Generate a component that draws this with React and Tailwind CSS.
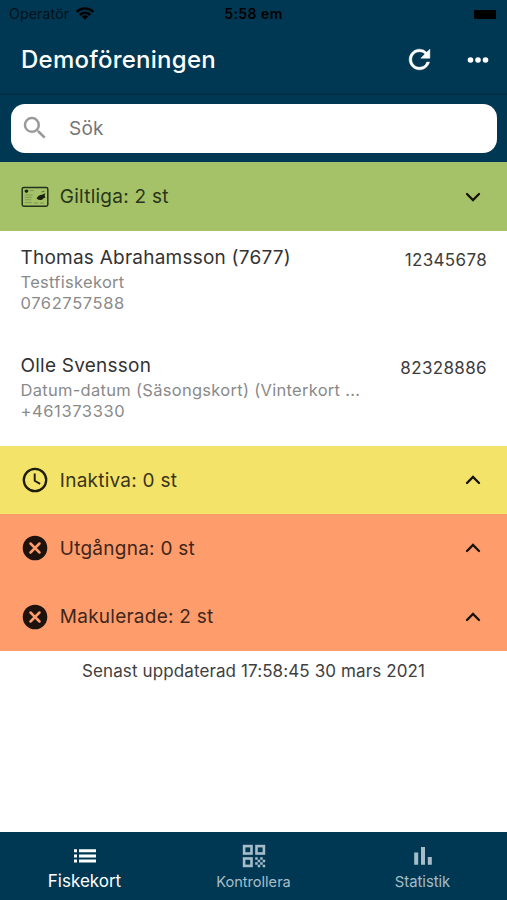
import React from 'react';
import clsx from 'clsx';

const permits = [
  { name: 'Thomas Abrahamsson (7677)', type: 'Testfiskekort', phone: '0762757588', number: '12345678' },
  { name: 'Olle Svensson', type: 'Datum-datum (Säsongskort) (Vinterkort ...', phone: '+461373330', number: '82328886' },
];

function WifiIcon() {
  return (
    <svg width="20" height="15" viewBox="0 0 20 15" fill="none" stroke="#000" strokeWidth="2.5">
      <path d="M1.7 4.8a11.8 11.8 0 0 1 16.6 0" />
      <path d="M4.8 8a7.4 7.4 0 0 1 10.4 0" />
      <path d="M10 12.8l-3.2-3.2a4.6 4.6 0 0 1 6.4 0z" fill="#000" stroke="none" />
    </svg>
  );
}

function RefreshIcon() {
  return (
    <svg width="31" height="31" viewBox="0 0 24 24" fill="#fff" stroke="#fff" strokeWidth="0.4">
      <path d="M17.65 6.35A7.958 7.958 0 0 0 12 4c-4.42 0-7.99 3.58-7.99 8s3.57 8 7.99 8c3.73 0 6.84-2.55 7.73-6h-2.08A5.99 5.99 0 0 1 12 18c-3.31 0-6-2.69-6-6s2.69-6 6-6c1.66 0 3.14.69 4.22 1.78L13 11h7V4l-2.35 2.35z" />
    </svg>
  );
}

function MoreIcon() {
  return (
    <svg width="22" height="8" viewBox="0 0 22 8" fill="#fff">
      <circle cx="3.5" cy="4" r="2.8" />
      <circle cx="11" cy="4" r="2.8" />
      <circle cx="18.5" cy="4" r="2.8" />
    </svg>
  );
}

function SearchIcon() {
  return (
    <svg width="30" height="30" viewBox="0 0 24 24" fill="#999">
      <path d="M15.5 14h-.79l-.28-.27A6.471 6.471 0 0 0 16 9.5 6.5 6.5 0 1 0 9.5 16c1.61 0 3.09-.59 4.23-1.57l.27.28v.79l5 4.99L20.49 19l-4.99-5zm-6 0C7.01 14 5 11.99 5 9.5S7.01 5 9.5 5 14 7.01 14 9.5 11.99 14 9.5 14z" />
    </svg>
  );
}

function CardIcon() {
  return (
    <svg width="28" height="22" viewBox="0 0 28 22" fill="none">
      <rect x="1.2" y="1.4" width="25.6" height="18.8" rx="1.6" stroke="#26331a" strokeWidth="1.5" />
      <path d="M3.6 4.2l2.2-.8 1.6 1-.6 1.8-1.4.8-1.6-1z" fill="#16200c" />
      <path d="M8.5 4.6h4.5M3.8 9h8M3.8 11.4h7M3.8 13.8h6.5M3.8 16.6h7M13 17h4M19 17h4" stroke="#7b954c" strokeWidth="0.9" />
      <path d="M15.6 12.4c1-2.2 3-3.4 5.4-3.6l3.2-1.6-.6 2.6.8 1.8-2.2.8c-1.2 1.8-4 2-5.6.8z" fill="#16200c" />
      <path d="M20.5 6l3-.8" stroke="#5d7438" strokeWidth="1.2" />
    </svg>
  );
}

function ClockIcon() {
  return (
    <svg width="28" height="28" viewBox="0 0 28 28" fill="none" stroke="#1d1b0b">
      <circle cx="14" cy="14" r="11.2" strokeWidth="2.3" />
      <path d="M13.7 7.6v7.1l5.4 3.2" strokeWidth="1.9" />
    </svg>
  );
}

function CancelIcon() {
  return (
    <svg width="28" height="28" viewBox="0 0 28 28">
      <circle cx="14" cy="14" r="12.3" fill="#1d120c" />
      <path d="M9.5 9.5l9 9M18.5 9.5l-9 9" stroke="#fe9c6c" strokeWidth="2.5" strokeLinecap="round" />
    </svg>
  );
}

function Chevron({ open }) {
  return (
    <svg width="16" height="12" viewBox="0 0 16 12" fill="none" stroke="#17130a" strokeWidth="2.3" strokeLinecap="round">
      <path d={open ? 'M2 3l6 6 6-6' : 'M2 9l6-6 6 6'} />
    </svg>
  );
}

function ListIcon() {
  return (
    <svg width="24" height="24" viewBox="0 0 24 24" fill="#fff">
      <path d="M1 5.2h3v3H1zM6 5.2h17v3H6zM1 10.4h3v3H1zM6 10.4h17v3H6zM1 15.6h3v3H1zM6 15.6h17v3H6z" />
    </svg>
  );
}

function QrIcon() {
  return (
    <svg width="24" height="24" viewBox="0 0 24 24">
      <g fill="none" stroke="#a6bdc9" strokeWidth="2.6">
        <rect x="2.1" y="2.1" width="7.4" height="7.4" />
        <rect x="14.5" y="2.1" width="7.4" height="7.4" />
        <rect x="2.1" y="14.5" width="7.4" height="7.4" />
      </g>
      <path
        fill="#a6bdc9"
        d="M13.2 13.2h2.5v2.5h-2.5zM18.2 13.2h2.5v2.5h-2.5zM15.7 15.7h2.5v2.5h-2.5zM20.7 15.7h2.5v2.5h-2.5zM13.2 18.2h2.5v2.5h-2.5zM18.2 18.2h2.5v2.5h-2.5zM15.7 20.7h2.5v2.5h-2.5zM20.7 20.7h2.5v2.5h-2.5z"
      />
    </svg>
  );
}

function ChartIcon() {
  return (
    <svg width="24" height="24" viewBox="0 0 24 24" fill="#a6bdc9">
      <path d="M3.2 8.4h4v12.4h-4zM10 3h4v17.8h-4zM16.8 13h4v7.8h-4z" />
    </svg>
  );
}

function Section({ icon, label, open, className }) {
  return (
    <button className={clsx('w-full flex items-center pl-[21px] pr-[26px]', className)}>
      <span className="w-7 flex justify-center">{icon}</span>
      <span className="ml-[10.8px] pt-px text-[19px] leading-6 tracking-[0.25px]">{label}</span>
      <span className="ml-auto">
        <Chevron open={open} />
      </span>
    </button>
  );
}

function PermitRow({ permit }) {
  return (
    <div className="h-[107.5px] pt-[15px] pl-[20.5px] pr-5 flex justify-between items-start whitespace-nowrap">
      <div>
        <div className="text-[19px] leading-6 tracking-[0.23px] text-[#333]">{permit.name}</div>
        <div className="mt-[2.4px] text-[16.5px] leading-[21px] text-[#8a8a8a]">
          <div className="tracking-[0.29px]">{permit.type}</div>
          <div className="tracking-[0.6px]">{permit.phone}</div>
        </div>
      </div>
      <div className="mt-[2px] text-[17px] leading-6 tracking-[0.35px] text-[#3c3c3c]">{permit.number}</div>
    </div>
  );
}

export default function App() {
  return (
    <div className="w-[507px] h-[900px] flex flex-col bg-white overflow-hidden font-['Inter',sans-serif]">
      <header className="bg-[#003853]">
        <div className="h-[26px] px-[9px] pt-[2px] grid grid-cols-3 items-center text-[14px] leading-5 text-black">
          <div className="flex items-center gap-[6px]">
            <span className="tracking-[0.2px] text-[#021119]">Operatör</span>
            <WifiIcon />
          </div>
          <div className="text-center font-semibold tracking-[0.45px]">5:58 em</div>
          <div className="flex justify-end pr-[2px]">
            <div className="w-[22px] h-[9px] rounded-[1px] bg-black" />
          </div>
        </div>
        <div className="h-[67px] pl-[21px] pr-[18.5px] flex items-center">
          <h1 className="pt-px text-[24px] leading-8 tracking-[0.25px] font-medium text-white">Demoföreningen</h1>
          <div className="ml-auto flex items-center gap-[32px]">
            <RefreshIcon />
            <MoreIcon />
          </div>
        </div>
        <div className="h-[69px] border-t-2 border-[#003048] pt-[8.5px] px-[10.5px]">
          <div className="h-[49px] rounded-[14px] bg-white flex items-center pl-[9px]">
            <div className="pb-px">
              <SearchIcon />
            </div>
            <span className="ml-[19.5px] pt-px text-[19px] leading-6 tracking-[0.2px] text-[#757575]">Sök</span>
          </div>
        </div>
      </header>

      <main className="flex-1">
        <Section icon={<CardIcon />} label="Giltliga: 2 st" open className="h-[69px] bg-[#a5c268] text-[#29351b]" />
        {permits.map((permit) => (
          <PermitRow key={permit.number} permit={permit} />
        ))}
        <Section icon={<ClockIcon />} label="Inaktiva: 0 st" className="h-[68px] bg-[#f3e368] text-[#3a351b]" />
        <Section icon={<CancelIcon />} label="Utgångna: 0 st" className="h-[68.5px] bg-[#fe9c6c] text-[#3f271b]" />
        <Section icon={<CancelIcon />} label="Makulerade: 2 st" className="h-[68.5px] bg-[#fe9c6c] text-[#3f271b]" />
        <p className="pt-2 text-center text-[17px] leading-6 tracking-[0.11px] text-[#404040]">Senast uppdaterad 17:58:45 30 mars 2021</p>
      </main>

      <nav className="h-[68px] grid grid-cols-3 bg-[#003853] text-[#a6bdc9]">
        <div className="pt-[12px] flex flex-col items-center">
          <ListIcon />
          <span className="mt-[3px] text-[17px] leading-5 text-white">Fiskekort</span>
        </div>
        <div className="pt-[12px] flex flex-col items-center">
          <QrIcon />
          <span className="mt-[3.5px] text-[14.6px] leading-5">Kontrollera</span>
        </div>
        <div className="pt-[12px] flex flex-col items-center">
          <ChartIcon />
          <span className="mt-[3.5px] text-[14.8px] leading-5">Statistik</span>
        </div>
      </nav>
    </div>
  );
}
